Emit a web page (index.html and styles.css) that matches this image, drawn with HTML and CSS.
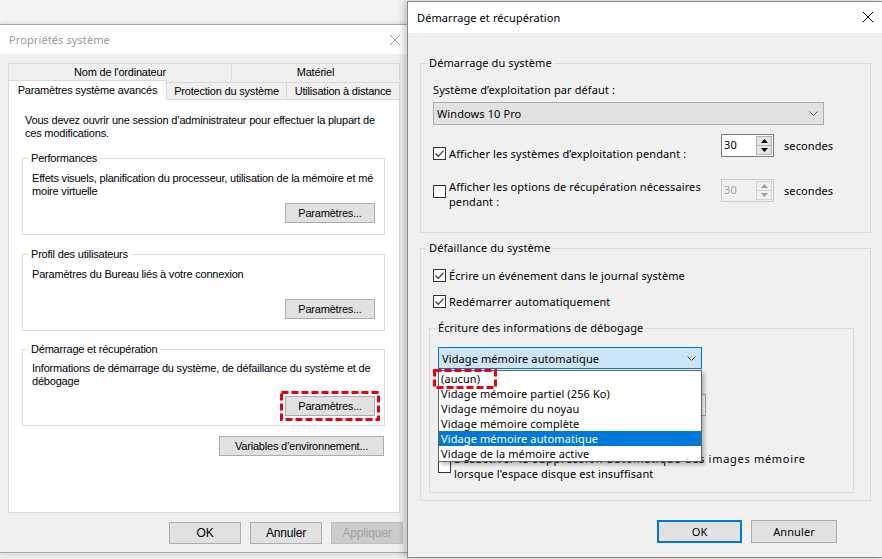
FILE: index.html
```html
<!DOCTYPE html>
<html lang="fr">
<head>
<meta charset="utf-8">
<title>Propriétés système</title>
<link rel="stylesheet" href="styles.css">
</head>
<body>

<div class="win win-left">
  <div class="titlebar tb-left">
    <span class="title title-inactive">Propriétés système</span>
    <svg class="xicon" width="10" height="10" viewBox="0 0 10 10"><path d="M0 0L10 10M10 0L0 10" stroke="#9a9a9a" stroke-width="1"/></svg>
  </div>
  <div class="lbody">
    <div class="tabs">
      <div class="tabrow back">
        <div class="tab t-nom">Nom de l'ordinateur</div>
        <div class="tab t-mat">Matériel</div>
      </div>
      <div class="tabrow front">
        <div class="tab sel t-adv">Paramètres système avancés</div>
        <div class="tab t-prot">Protection du système</div>
        <div class="tab t-dist">Utilisation à distance</div>
      </div>
    </div>
    <div class="panel">
      <p class="intro">Vous devez ouvrir une session d’administrateur pour effectuer la plupart de<br>ces modifications.</p>

      <fieldset class="grp g-perf">
        <legend>Performances</legend>
        <div class="grp-in">
          <p class="desc">Effets visuels, planification du processeur, utilisation de la mémoire et mé<br>moire virtuelle</p>
          <div class="btnrow"><button class="lbtn w90">Paramètres...</button></div>
        </div>
      </fieldset>

      <fieldset class="grp g-prof">
        <legend>Profil des utilisateurs</legend>
        <div class="grp-in">
          <p class="desc">Paramètres du Bureau liés à votre connexion</p>
          <div class="btnrow"><button class="lbtn w90">Paramètres...</button></div>
        </div>
      </fieldset>

      <fieldset class="grp g-dem">
        <legend>Démarrage et récupération</legend>
        <div class="grp-in">
          <p class="desc">Informations de démarrage du système, de défaillance du système et de<br>débogage</p>
          <div class="btnrow btnrow-dem">
            <span class="redwrap">
              <button class="lbtn w90">Paramètres...</button>
              <svg class="redbox redbox-left" width="100" height="30" viewBox="0 0 100 30"><rect x="1.5" y="1.5" width="97" height="27" fill="none" stroke="#e8000d" stroke-width="3" stroke-dasharray="7 3"/></svg>
            </span>
          </div>
        </div>
      </fieldset>

      <div class="envrow"><button class="lbtn w165">Variables d’environnement...</button></div>
    </div>
    <div class="lfoot">
      <button class="lbtn fbtn">OK</button>
      <button class="lbtn fbtn">Annuler</button>
      <button class="lbtn fbtn disabled">Appliquer</button>
    </div>
  </div>
</div>

<div class="win win-right">
  <div class="titlebar tb-right">
    <span class="title">Démarrage et récupération</span>
    <svg class="xicon" width="10" height="10" viewBox="0 0 10 10"><path d="M0 0L10 10M10 0L0 10" stroke="#000" stroke-width="1"/></svg>
  </div>
  <div class="rbody">
    <fieldset class="rgrp r-start">
      <legend>Démarrage du système</legend>
      <div class="rgrp-in rin-start">
        <div class="lbl">Système d’exploitation par défaut :</div>
        <div class="combo combo-os">
          <span>Windows 10 Pro</span>
          <svg width="9" height="5" viewBox="0 0 9 5"><path d="M0.5 0.5l4 4 4-4" fill="none" stroke="#555"/></svg>
        </div>

        <div class="trow trow1">
          <div class="chk chk-r1">
            <svg class="cb" width="13" height="13" viewBox="0 0 13 13"><rect x="0.5" y="0.5" width="12" height="12" fill="#fff" stroke="#333"/><path d="M2.5 6.5l2.8 2.8 5.2-5.6" fill="none" stroke="#333" stroke-width="1.2"/></svg>
            <span>Afficher les systèmes d’exploitation pendant :</span>
          </div>
          <div class="spin">
            <span class="spinval">30</span>
            <div class="spinbtns">
              <span class="sb"><svg width="7" height="4" viewBox="0 0 7 4"><path d="M0 4L3.5 0L7 4Z" fill="#000"/></svg></span>
              <span class="sb"><svg width="7" height="4" viewBox="0 0 7 4"><path d="M0 0L3.5 4L7 0Z" fill="#000"/></svg></span>
            </div>
          </div>
          <span class="secs">secondes</span>
        </div>

        <div class="trow trow2">
          <div class="chk chk-r2">
            <svg class="cb" width="13" height="13" viewBox="0 0 13 13"><rect x="0.5" y="0.5" width="12" height="12" fill="#fff" stroke="#333"/></svg>
            <span>Afficher les options de récupération nécessaires<br>pendant :</span>
          </div>
          <div class="spin spin-dis">
            <span class="spinval">30</span>
            <div class="spinbtns">
              <span class="sb"><svg width="7" height="4" viewBox="0 0 7 4"><path d="M0 4L3.5 0L7 4Z" fill="#a0a0a0"/></svg></span>
              <span class="sb"><svg width="7" height="4" viewBox="0 0 7 4"><path d="M0 0L3.5 4L7 0Z" fill="#a0a0a0"/></svg></span>
            </div>
          </div>
          <span class="secs">secondes</span>
        </div>
      </div>
    </fieldset>

    <fieldset class="rgrp r-fail">
      <legend>Défaillance du système</legend>
      <div class="rgrp-in rin-fail">
        <div class="chk chk-line">
          <svg class="cb" width="13" height="13" viewBox="0 0 13 13"><rect x="0.5" y="0.5" width="12" height="12" fill="#fff" stroke="#333"/><path d="M2.5 6.5l2.8 2.8 5.2-5.6" fill="none" stroke="#333" stroke-width="1.2"/></svg>
          <span>Écrire un événement dans le journal système</span>
        </div>
        <div class="chk chk-line chk-gap">
          <svg class="cb" width="13" height="13" viewBox="0 0 13 13"><rect x="0.5" y="0.5" width="12" height="12" fill="#fff" stroke="#333"/><path d="M2.5 6.5l2.8 2.8 5.2-5.6" fill="none" stroke="#333" stroke-width="1.2"/></svg>
          <span>Redémarrer automatiquement</span>
        </div>

        <fieldset class="rgrp r-debug">
          <legend>Écriture des informations de débogage</legend>
          <div class="rgrp-in rin-debug">
            <div class="ddwrap">
              <div class="combo combo-focus">
                <span>Vidage mémoire automatique</span>
                <svg width="9" height="5" viewBox="0 0 9 5"><path d="M0.5 0.5l4 4 4-4" fill="none" stroke="#555"/></svg>
              </div>
              <ul class="ddlist">
                <li>(aucun)</li>
                <li>Vidage mémoire partiel (256 Ko)</li>
                <li>Vidage mémoire du noyau</li>
                <li>Vidage mémoire complète</li>
                <li class="hl">Vidage mémoire automatique</li>
                <li>Vidage de la mémoire active</li>
              </ul>
              <svg class="redbox redbox-right" width="64" height="20" viewBox="0 0 64 20"><rect x="1.5" y="1.5" width="61" height="17" fill="none" stroke="#e8000d" stroke-width="3" stroke-dasharray="7 3"/></svg>
            </div>
            <div class="dumpspace"></div>
            <div class="textfield"></div>
            <div class="chk chk-line chk-over">
              <svg class="cb" width="13" height="13" viewBox="0 0 13 13"><rect x="0.5" y="0.5" width="12" height="12" fill="#fff" stroke="#333"/><path d="M2.5 6.5l2.8 2.8 5.2-5.6" fill="none" stroke="#333" stroke-width="1.2"/></svg>
            </div>
            <div class="chk chk-last">
              <svg class="cb" width="13" height="13" viewBox="0 0 13 13"><rect x="0.5" y="0.5" width="12" height="12" fill="#fff" stroke="#333"/></svg>
              <span><span class="wide-line">Désactiver la suppression automatique des images mémoire</span><br>lorsque l'espace disque est insuffisant</span>
            </div>
          </div>
        </fieldset>
      </div>
    </fieldset>

    <div class="rfoot">
      <button class="rbtn rbtn-def">OK</button>
      <button class="rbtn">Annuler</button>
    </div>
  </div>
</div>

</body>
</html>
```
FILE: styles.css
```css
* { box-sizing: border-box; }
html, body { margin: 0; padding: 0; }
body {
  width: 882px;
  height: 559px;
  position: relative;
  overflow: hidden;
  background: #f4f4f4;
  font-family: "Liberation Sans", Arial, sans-serif;
  color: #000;
}
p { margin: 0; }
button { font: inherit; color: inherit; margin: 0; cursor: default; }

/* ---------- windows ---------- */
.win { position: absolute; background: #f0f0f0; }
.win-left {
  left: 0;
  top: 24px;
  width: 412px;
  height: 529px;
  border-top: 1px solid #aaaaaa;
  border-bottom: 1px solid #aaaaaa;
  box-shadow: 0 1px 8px rgba(0,0,0,.16);
  font: 11px/13px "Liberation Sans", Arial, sans-serif;
  letter-spacing: -0.2px;
}
.win-right {
  left: 407px;
  top: 1px;
  width: 476px;
  height: 557px;
  border: 1px solid #8a8a8a;
  border-right: 0;
  box-shadow: -3px 0 7px rgba(0,0,0,.22);
  font: 11px/15px "Noto Sans", "Open Sans", sans-serif;
  letter-spacing: 0.1px;
  z-index: 2;
}

.titlebar {
  background: #fff;
  display: flex;
  align-items: center;
  justify-content: space-between;
  font: 11px/15px "Noto Sans", "Open Sans", sans-serif;
  letter-spacing: 0.1px;
}
.tb-left { height: 29px; padding: 0 12px 0 9px; }
.tb-right { height: 31px; padding: 0 10px 1px 9px; }
.title-inactive { color: #999; }
.xicon { display: block; }

/* ---------- left window ---------- */
.lbody { padding: 9px 0 0 8px; }
.tabs { width: 392px; }
.tabrow { display: flex; }
.tab {
  display: flex;
  align-items: center;
  justify-content: center;
  border: 1px solid #d9d9d9;
  border-bottom: 0;
  background: #f0f0f0;
  white-space: nowrap;
}
.back { height: 17px; }
.back .tab { height: 17px; }
.back .tab + .tab { border-left: 0; }
.t-nom { width: 224px; }
.t-mat { width: 168px; }
.front { height: 19px; align-items: flex-end; position: relative; z-index: 1; }
.front .tab { height: 17px; }
.front .tab.sel { height: 20px; margin-bottom: -1px; background: #fff; }
.t-adv { width: 159px; }
.t-prot { width: 120px; border-left: 0; }
.t-dist { width: 113px; border-left: 0; }

.panel {
  width: 392px;
  height: 414px;
  background: #fff;
  border: 1px solid #d9d9d9;
  padding: 14px 14px 0 13px;
}
.intro { margin-left: 3px; white-space: nowrap; }

.grp { margin: 0; padding: 0; border: 1px solid #dcdcdc; min-width: 0; }
.grp legend { margin-left: 5px; padding: 0 3px; line-height: 14px; }
.g-perf { margin-top: 11px; }
.g-prof { margin-top: 12px; }
.g-dem { margin-top: 11px; }
.grp-in { padding: 7px 9px 11px 9px; }
.desc { height: 26px; white-space: nowrap; }
.btnrow { display: flex; justify-content: flex-end; margin-top: 5px; }
.btnrow-dem { margin-top: 8px; }
.g-dem .grp-in { padding-top: 6px; padding-bottom: 9px; }

.lbtn {
  height: 20px;
  background: #e1e1e1;
  border: 1px solid #adadad;
  padding: 0;
  font: inherit;
  letter-spacing: -0.2px;
  white-space: nowrap;
}
.w90 { width: 90px; }
.w165 { width: 165px; }
.envrow { display: flex; justify-content: flex-end; margin: 10px 1px 0 0; }

.lfoot { display: flex; justify-content: flex-end; gap: 9px; padding: 9px 9px 0 0; }
.fbtn { width: 72px; height: 22px; font-size: 12px; }
.fbtn.disabled { color: #a0a0a0; background: #cccccc; border-color: #bfbfbf; }

.redwrap { position: relative; display: block; }
.redbox { position: absolute; display: block; pointer-events: none; }
.redbox-left { left: -5px; top: -5px; }

/* ---------- right window ---------- */
.rbody { padding: 22px 12px 0 12px; }
.rgrp { margin: 0; padding: 0; border: 1px solid #dcdcdc; min-width: 0; }
.rgrp legend { margin-left: 6px; padding: 0 2px; line-height: 16px; }
.rin-start { padding: 11px 0 23px 12px; }
.lbl { white-space: nowrap; }
.combo {
  display: flex;
  align-items: center;
  justify-content: space-between;
  background: #e1e1e1;
  border: 1px solid #adadad;
  padding: 0 5px 0 3px;
}
.combo-os { width: 391px; height: 23px; margin-top: 5px; }
.combo-focus { width: 264px; height: 22px; background: #cce4f7; border-color: #0078d7; }

.trow { display: grid; grid-template-columns: 278px 53px auto; column-gap: 10px; align-items: start; }
.trow1 { margin-top: 9px; height: 23px; }
.trow2 { margin-top: 22px; }
.chk { display: flex; align-items: flex-start; white-space: nowrap; }
.chk .cb { flex: none; margin-right: 3px; }
.chk-r1 { padding-top: 12px; }
.chk-r1 .cb { margin-top: 1px; }
.chk-r2 .cb { margin-top: 6px; }
.secs { padding-top: 4px; }

.spin { width: 53px; height: 23px; border: 1px solid #7a7a7a; background: #fff; display: flex; }
.spinval { flex: 1; line-height: 20px; padding-left: 2px; }
.spinbtns { width: 17px; display: flex; flex-direction: column; padding: 1px 1px 1px 0; gap: 0; }
.sb {
  flex: 1;
  background: #e5e5e5;
  border: 1px solid #b4b4b4;
  display: flex;
  align-items: center;
  justify-content: center;
}
.sb + .sb { border-top: 0; }
.spin-dis { border-color: #cccccc; background: #f0f0f0; color: #a0a0a0; }
.spin-dis .sb { background: #f0f0f0; border-color: #d4d4d4; }

.r-fail { margin-top: 7px; }
.rin-fail { padding: 12px 16px 7px 8px; }
.chk-line { margin-left: 4px; }
.chk-line .cb { margin-top: 1px; }
.chk-gap { margin-top: 11px; }
.r-debug { margin-top: 11px; }
.rin-debug { padding: 11px 0 11px 8px; }

.ddwrap { position: relative; width: 264px; }
.ddlist {
  position: absolute;
  left: 0;
  top: 23px;
  width: 264px;
  margin: 0;
  padding: 0;
  list-style: none;
  background: #fff;
  border: 1px solid #646464;
  box-shadow: 3px 3px 3px rgba(0,0,0,.22);
  z-index: 5;
}
.ddlist li { height: 15px; line-height: 15px; padding-left: 2px; white-space: nowrap; }
.ddlist li.hl { background: #0078d7; color: #fff; }
.redbox-right { left: -5px; top: 22px; z-index: 6; }

.dumpspace { height: 15px; margin-top: 5px; }
.textfield {
  width: 268px;
  height: 22px;
  margin-top: 5px;
  border: 1px solid #adadad;
  background: #fff;
}
.chk-over { margin-left: 0; margin-top: 12px; height: 15px; }
.chk-last { margin-top: 8px; align-items: center; }
.wide-line { letter-spacing: 0.7px; }

.rfoot { display: flex; justify-content: flex-end; gap: 9px; margin: 19px 34px 0 0; }
.rbtn {
  width: 86px;
  height: 23px;
  background: #e1e1e1;
  border: 1px solid #adadad;
  padding: 0;
  font: 11px/15px "Noto Sans", "Open Sans", sans-serif;
  letter-spacing: 0.1px;
}
.rbtn-def { width: 85px; border: 2px solid #0078d7; }
```
